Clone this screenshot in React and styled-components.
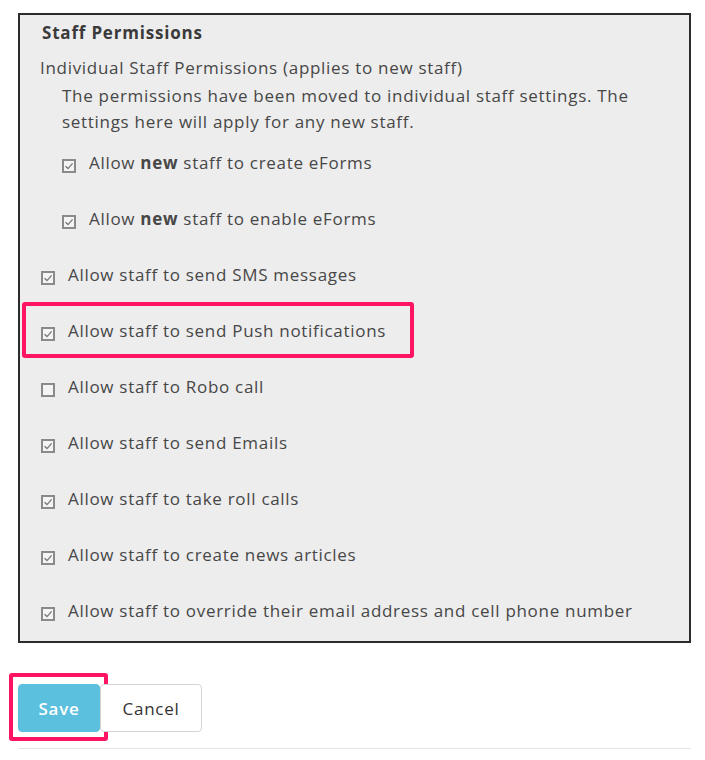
import React from 'react';
import styled, {createGlobalStyle} from "styled-components";

const GlobalStyle = createGlobalStyle`
  body {
    margin: 0;
    background: #ffffff;
    font-family: "Open Sans", "Liberation Sans", sans-serif;
  }
`

const Page = styled.div`
  width: 673px;
  padding: 13px 0 0 18px;
`

const Panel = styled.div`
  border: 2px solid #2b2b2b;
  background: #ededed;
  padding: 6px 0 2px 0;
  color: #474747;
  font-size: 17px;
  letter-spacing: 0.7px;
`

const Title = styled.h3`
  margin: 0 0 11px 22px;
  font-size: 17px;
  line-height: 24px;
  font-weight: 700;
  letter-spacing: 0.8px;
  color: #3a3a3a;
`

const SubTitle = styled.div`
  margin-left: 20px;
  line-height: 24px;
`

const Note = styled.p`
  margin: 3px 40px 0 42px;
  line-height: 26px;
`

const Row = styled.label`
  position: relative;
  display: flex;
  align-items: center;
  height: 56px;
  padding-left: ${p => p.$indent ? 42 : 21}px;

  ${p => p.$marked && `
    &::after {
      content: '';
      position: absolute;
      left: 2px;
      top: -1px;
      width: 392px;
      height: 56px;
      border: 4px solid #ff1462;
      border-radius: 3px;
      box-sizing: border-box;
    }
  `}
`

const Box = styled.span`
  flex: none;
  width: 14px;
  height: 14px;
  box-sizing: border-box;
  border: 2px solid #8a8a8a;
  background: #f4f4f4;
  margin: 5px 13px 0 0;
  display: flex;
  align-items: center;
  justify-content: center;
`

const Label = styled.span`
  line-height: 24px;

  b {
    font-weight: 700;
  }
`

const Actions = styled.div`
  display: flex;
  margin-top: 41px;
`

const Button = styled.button`
  position: relative;
  height: 48px;
  padding: 0;
  border-radius: 4px;
  font-family: "Open Sans", "Liberation Sans", sans-serif;
  font-size: 17px;
  letter-spacing: 0.7px;
  cursor: pointer;
`

const SaveButton = styled(Button)`
  width: 82px;
  background: #5bc0de;
  border: 1px solid #5bc0de;
  color: #ffffff;
  font-weight: 600;

  &::after {
    content: '';
    position: absolute;
    left: -10px;
    right: -9px;
    top: -12px;
    bottom: -10px;
    border: 4px solid #ff1462;
    border-radius: 3px;
  }
`

const CancelButton = styled(Button)`
  width: 102px;
  background: #ffffff;
  border: 1px solid #d4d4d4;
  color: #333333;
`

const Rule = styled.div`
  margin-top: 16px;
  border-top: 1px solid #e6e6e6;
`

const Check = ({checked}) => (
    <Box>
        {checked ?
            <svg width="10" height="10" viewBox="0 0 10 10">
                <path d="M1.5 5.2 L4 7.6 L8.6 2.4" fill="none" stroke="#7a7a7a" strokeWidth="1.4"/>
            </svg>
            : null}
    </Box>
)

const perms = [
    {text: <>Allow <b>new</b> staff to create eForms</>, checked: true, indent: true},
    {text: <>Allow <b>new</b> staff to enable eForms</>, checked: true, indent: true},
    {text: 'Allow staff to send SMS messages', checked: true},
    {text: 'Allow staff to send Push notifications', checked: true, marked: true},
    {text: 'Allow staff to Robo call', checked: false},
    {text: 'Allow staff to send Emails', checked: true},
    {text: 'Allow staff to take roll calls', checked: true},
    {text: 'Allow staff to create news articles', checked: true},
    {text: 'Allow staff to override their email address and cell phone number', checked: true},
]

const App = () => {
    return (
        <Page>
            <GlobalStyle/>
            <Panel>
                <Title>Staff Permissions</Title>
                <SubTitle>Individual Staff Permissions (applies to new staff)</SubTitle>
                <Note>The permissions have been moved to individual staff settings. The settings here will apply for any new staff.</Note>
                {perms.map((p, i) =>
                    <Row key={i} $indent={p.indent} $marked={p.marked}>
                        <Check checked={p.checked}/>
                        <Label>{p.text}</Label>
                    </Row>
                )}
            </Panel>
            <Actions>
                <SaveButton>Save</SaveButton>
                <CancelButton>Cancel</CancelButton>
            </Actions>
            <Rule/>
        </Page>
    );
};

export default App;
